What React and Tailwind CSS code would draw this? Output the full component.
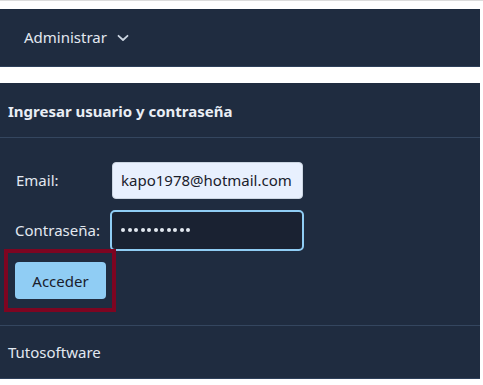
export default function App() {
  const font = { fontFamily: '"Noto Sans", "Open Sans", sans-serif' };
  const dots = Array.from({ length: 11 });
  return (
    <div className="w-[483px] h-[385px] bg-white overflow-hidden" style={font}>
      <div className="h-px bg-[#dcdcdc]" />
      <div className="h-[8px]" />
      <div className="w-[480px] h-[58px] bg-[#1f2c40] border-b border-[#2e405a] flex items-center pl-[24px]">
        <span className="text-[#e2e8f0] text-[15px]">Administrar</span>
        <svg className="ml-[10px] mt-[1px]" width="12" height="12" viewBox="0 0 12 12" fill="none">
          <path d="M1.5 3.8 L6 8 L10.5 3.8" stroke="#cbd5e1" strokeWidth="1.8" strokeLinecap="round" strokeLinejoin="round" />
        </svg>
      </div>
      <div className="h-[16px]" />
      <div className="w-[480px] h-[296px] bg-[#1f2c40] border-b border-[#2e405a] flex flex-col">
        <div className="h-[55px] border-b border-[#34465f] flex items-center pl-[8px] pt-[2px]">
          <span className="text-[#e9eef5] text-[15px] font-bold">Ingresar usuario y contraseña</span>
        </div>
        <div className="relative h-[187px] pt-[23px] pl-[15px]">
          <div className="flex items-center h-[38px]">
            <label className="w-[96px] text-[#e2e8f0] text-[15px] pl-px">Email:</label>
            <div className="w-[191px] h-[37px] ml-[1px] bg-[#e8f0fe] border border-[#cbd5e1] rounded-[4px] flex items-center pl-[8px] text-[#1a202c] text-[15px]">
              kapo1978@hotmail.com
            </div>
          </div>
          <div className="flex items-center h-[40px] mt-[11px]">
            <label className="w-[95px] text-[#e2e8f0] text-[15px]">Contraseña:</label>
            <div className="w-[194px] h-[41px] bg-[#1a2232] border-2 border-[#90cdf4] rounded-[5px] flex items-center pl-[9px] gap-[2.5px]">
              {dots.map((_, i) => (
                <span key={i} className="w-[4px] h-[4px] rounded-full bg-[#e2e8f0]" />
              ))}
            </div>
          </div>
          <button className="mt-[12px] w-[91px] h-[37px] bg-[#90cdf4] rounded-[4px] text-[#1a202c] text-[15px] flex items-center justify-center pt-[2px]">
            Acceder
          </button>
          <div className="absolute left-[4px] top-[111px] w-[112px] h-[63px] border-[4px] border-[#7d0521]" />
        </div>
        <div className="flex-1 border-t border-[#34465f] flex items-center pl-[8px]">
          <span className="text-[#e2e8f0] text-[15px]">Tutosoftware</span>
        </div>
      </div>
    </div>
  );
}
